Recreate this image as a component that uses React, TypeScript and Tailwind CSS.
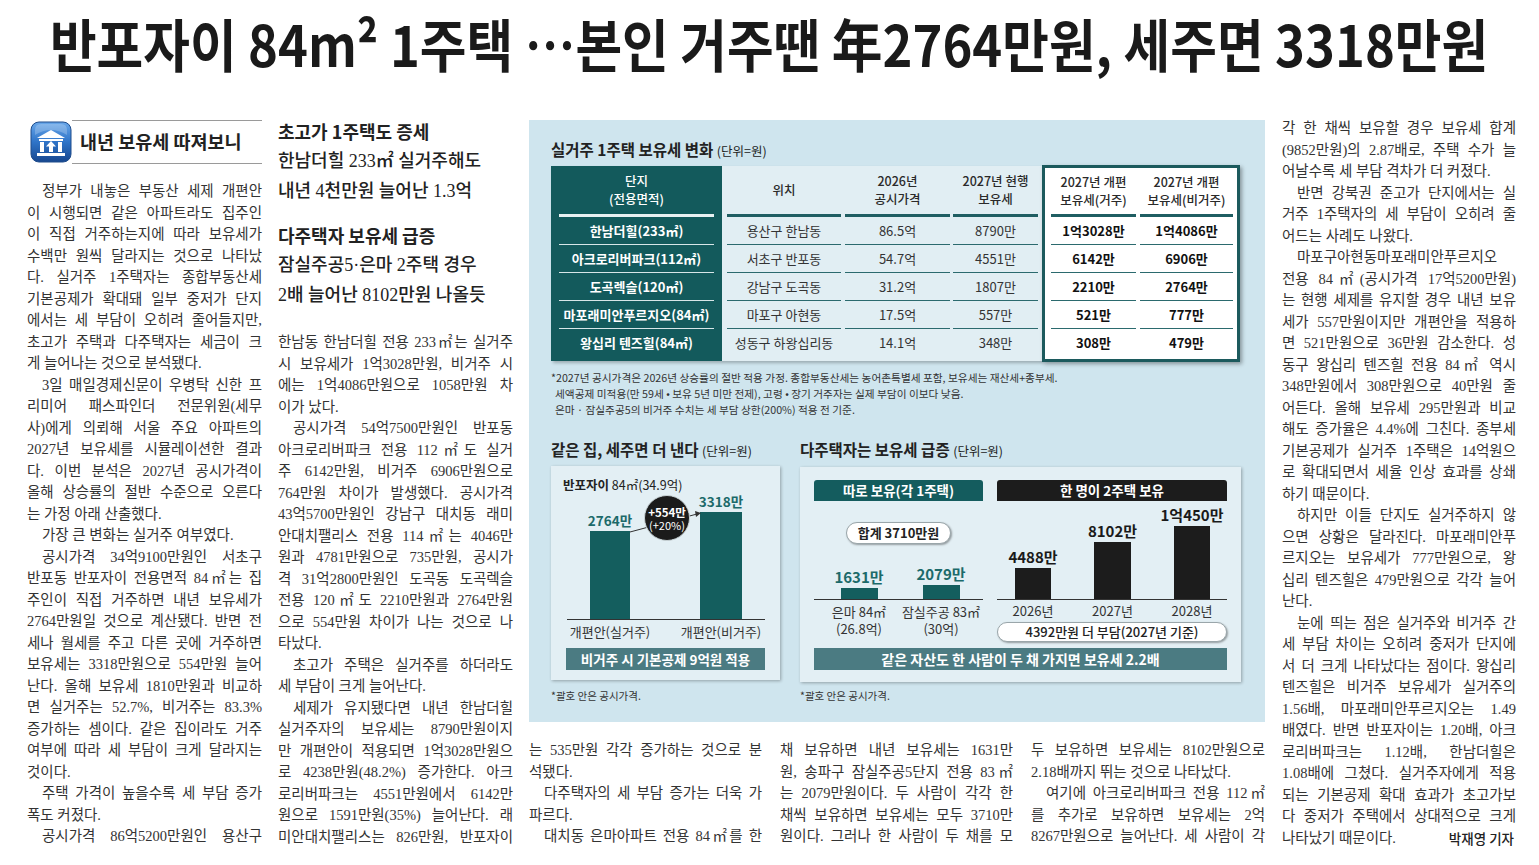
import clsx from "clsx";

const serif = "font-['Liberation_Serif','Noto_Sans_CJK_KR',serif]";
const sans = "font-['Noto_Sans_CJK_KR','Noto_Sans',sans-serif]";

// ">" at start = paragraph indent, "$" at end = last line of paragraph
const col1 = [
  ">정부가 내놓은 부동산 세제 개편안",
  "이 시행되면 같은 아파트라도 집주인",
  "이 직접 거주하는지에 따라 보유세가",
  "수백만 원씩 달라지는 것으로 나타났",
  "다. 실거주 1주택자는 종합부동산세",
  "기본공제가 확대돼 일부 중저가 단지",
  "에서는 세 부담이 오히려 줄어들지만,",
  "초고가 주택과 다주택자는 세금이 크",
  "게 늘어나는 것으로 분석됐다.$",
  ">3일 매일경제신문이 우병탁 신한 프",
  "리미어 패스파인더 전문위원(세무",
  "사)에게 의뢰해 서울 주요 아파트의",
  "2027년 보유세를 시뮬레이션한 결과",
  "다. 이번 분석은 2027년 공시가격이",
  "올해 상승률의 절반 수준으로 오른다",
  "는 가정 아래 산출했다.$",
  ">가장 큰 변화는 실거주 여부였다.$",
  ">공시가격 34억9100만원인 서초구",
  "반포동 반포자이 전용면적 84㎡는 집",
  "주인이 직접 거주하면 내년 보유세가",
  "2764만원일 것으로 계산됐다. 반면 전",
  "세나 월세를 주고 다른 곳에 거주하면",
  "보유세는 3318만원으로 554만원 늘어",
  "난다. 올해 보유세 1810만원과 비교하",
  "면 실거주는 52.7%, 비거주는 83.3%",
  "증가하는 셈이다. 같은 집이라도 거주",
  "여부에 따라 세 부담이 크게 달라지는",
  "것이다.$",
  ">주택 가격이 높을수록 세 부담 증가",
  "폭도 커졌다.$",
  ">공시가격 86억5200만원인 용산구",
];

const col2 = [
  "한남동 한남더힐 전용 233㎡는 실거주",
  "시 보유세가 1억3028만원, 비거주 시",
  "에는 1억4086만원으로 1058만원 차",
  "이가 났다.$",
  ">공시가격 54억7500만원인 반포동",
  "아크로리버파크 전용 112㎡도 실거",
  "주 6142만원, 비거주 6906만원으로",
  "764만원 차이가 발생했다. 공시가격",
  "43억5700만원인 강남구 대치동 래미",
  "안대치팰리스 전용 114㎡는 4046만",
  "원과 4781만원으로 735만원, 공시가",
  "격 31억2800만원인 도곡동 도곡렉슬",
  "전용 120㎡도 2210만원과 2764만원",
  "으로 554만원 차이가 나는 것으로 나",
  "타났다.$",
  ">초고가 주택은 실거주를 하더라도",
  "세 부담이 크게 늘어난다.$",
  ">세제가 유지됐다면 내년 한남더힐",
  "실거주자의 보유세는 8790만원이지",
  "만 개편안이 적용되면 1억3028만원으",
  "로 4238만원(48.2%) 증가한다. 아크",
  "로리버파크는 4551만원에서 6142만",
  "원으로 1591만원(35%) 늘어난다. 래",
  "미안대치팰리스는 826만원, 반포자이",
];

const colA = [
  "는 535만원 각각 증가하는 것으로 분",
  "석됐다.$",
  ">다주택자의 세 부담 증가는 더욱 가",
  "파르다.$",
  ">대치동 은마아파트 전용 84㎡를 한",
];

const colB = [
  "채 보유하면 내년 보유세는 1631만",
  "원, 송파구 잠실주공5단지 전용 83㎡",
  "는 2079만원이다. 두 사람이 각각 한",
  "채씩 보유하면 보유세는 모두 3710만",
  "원이다. 그러나 한 사람이 두 채를 모",
];

const colC = [
  "두 보유하면 보유세는 8102만원으로",
  "2.18배까지 뛰는 것으로 나타났다.$",
  ">여기에 아크로리버파크 전용 112㎡",
  "를 추가로 보유하면 보유세는 2억",
  "8267만원으로 늘어난다. 세 사람이 각",
];

const colRight = [
  "각 한 채씩 보유할 경우 보유세 합계",
  "(9852만원)의 2.87배로, 주택 수가 늘",
  "어날수록 세 부담 격차가 더 커졌다.$",
  ">반면 강북권 준고가 단지에서는 실",
  "거주 1주택자의 세 부담이 오히려 줄",
  "어드는 사례도 나왔다.$",
  ">마포구아현동마포래미안푸르지오",
  "전용 84㎡(공시가격 17억5200만원)",
  "는 현행 세제를 유지할 경우 내년 보유",
  "세가 557만원이지만 개편안을 적용하",
  "면 521만원으로 36만원 감소한다. 성",
  "동구 왕십리 텐즈힐 전용 84㎡ 역시",
  "348만원에서 308만원으로 40만원 줄",
  "어든다. 올해 보유세 295만원과 비교",
  "해도 증가율은 4.4%에 그친다. 종부세",
  "기본공제가 실거주 1주택은 14억원으",
  "로 확대되면서 세율 인상 효과를 상쇄",
  "하기 때문이다.$",
  ">하지만 이들 단지도 실거주하지 않",
  "으면 상황은 달라진다. 마포래미안푸",
  "르지오는 보유세가 777만원으로, 왕",
  "십리 텐즈힐은 479만원으로 각각 늘어",
  "난다.$",
  ">눈에 띄는 점은 실거주와 비거주 간",
  "세 부담 차이는 오히려 중저가 단지에",
  "서 더 크게 나타났다는 점이다. 왕십리",
  "텐즈힐은 비거주 보유세가 실거주의",
  "1.56배, 마포래미안푸르지오는 1.49",
  "배였다. 반면 반포자이는 1.20배, 아크",
  "로리버파크는 1.12배, 한남더힐은",
  "1.08배에 그쳤다. 실거주자에게 적용",
  "되는 기본공제 확대 효과가 초고가보",
  "다 중저가 주택에서 상대적으로 크게",
];

function Lines({ lines, className }: { lines: string[]; className?: string }) {
  return (
    <div className={clsx(serif, "text-[14.5px] text-[#333]", className)}>
      {lines.map((raw, i) => {
        const indent = raw.startsWith(">");
        const end = raw.endsWith("$");
        const text = raw.replace(/^>/, "").replace(/\$$/, "");
        return (
          <div
            key={i}
            className={clsx(
              "h-[21.5px] leading-[21.5px] whitespace-nowrap",
              indent && "pl-[15px]",
              end ? "text-left" : "text-justify [text-align-last:justify]"
            )}
          >
            {text}
          </div>
        );
      })}
    </div>
  );
}

function HouseIcon() {
  return (
    <svg width="42" height="42" viewBox="0 0 42 42" className="shrink-0">
      <defs>
        <linearGradient id="hb" x1="0" y1="0" x2="0" y2="1">
          <stop offset="0" stopColor="#6aa8ea" />
          <stop offset="0.5" stopColor="#2f74c8" />
          <stop offset="1" stopColor="#17478f" />
        </linearGradient>
      </defs>
      <rect x="1" y="1" width="40" height="40" rx="8" fill="url(#hb)" stroke="#1e4c8c" />
      <path d="M5 14 Q21 4 37 14 L37 9 Q37 3 31 3 L11 3 Q5 3 5 9 Z" fill="#ffffff" opacity="0.22" />
      <polygon points="21,9 35,17 7,17" fill="#fff" />
      <rect x="9" y="18" width="24" height="2" fill="#fff" />
      <rect x="10" y="21" width="4" height="10" fill="#fff" />
      <rect x="28" y="21" width="4" height="10" fill="#fff" />
      <polygon points="21,20 26,25.5 23,25.5 23,31 19,31 19,25.5 16,25.5" fill="#fff" />
      <rect x="7" y="32" width="28" height="3" fill="#fff" />
    </svg>
  );
}

const rows = [
  ["한남더힐(233㎡)", "용산구 한남동", "86.5억", "8790만", "1억3028만", "1억4086만"],
  ["아크로리버파크(112㎡)", "서초구 반포동", "54.7억", "4551만", "6142만", "6906만"],
  ["도곡렉슬(120㎡)", "강남구 도곡동", "31.2억", "1807만", "2210만", "2764만"],
  ["마포래미안푸르지오(84㎡)", "마포구 아현동", "17.5억", "557만", "521만", "777만"],
  ["왕십리 텐즈힐(84㎡)", "성동구 하왕십리동", "14.1억", "348만", "308만", "479만"],
];

function TableCol({
  className,
  head,
  idx,
  tone,
  headH,
}: {
  className: string;
  head: React.ReactNode;
  idx: number;
  tone: "teal" | "plain" | "bold";
  headH: string;
}) {
  const teal = tone === "teal";
  return (
    <div className={clsx("flex flex-col", className)}>
      <div
        className={clsx(
          "flex items-center justify-center text-center leading-[18px] text-[12.5px] font-medium",
          headH,
          teal ? "text-white" : "text-[#2a2a2a]"
        )}
      >
        {head}
      </div>
      <div className={clsx("h-[3px]", teal ? "bg-[#e8f1f2]" : "bg-[#1f5e62]")} />
      {rows.map((r, i) => (
        <div
          key={i}
          className={clsx(
            "h-[28px] flex items-center justify-center whitespace-nowrap text-[13px]",
            i < rows.length - 1 && "border-b",
            teal ? "border-[#d7e6e8] text-white font-bold" : "border-[#2b6a6e]",
            tone === "plain" && "text-[#333]",
            tone === "bold" && "text-[#111] font-bold"
          )}
        >
          {r[idx]}
        </div>
      ))}
    </div>
  );
}

function ValueBar({
  label,
  bar,
  color,
  text,
  wrap,
  barW,
  size,
}: {
  label: string;
  bar: string;
  color: string;
  text: string;
  wrap: string;
  barW: string;
  size: string;
}) {
  return (
    <div className={clsx("flex flex-col items-center", wrap)}>
      <div className={clsx("leading-[16px] mb-[3px] font-bold whitespace-nowrap", size, text)}>{label}</div>
      <div className={clsx(barW, bar, color)} />
    </div>
  );
}

function Infographic() {
  return (
    <div className={clsx(sans, "mt-[2px] h-[602px] bg-[#cfe5ee] pl-[22px] pt-[19px]")}>
      <div className="h-[20px] leading-[20px] text-[15.5px] font-bold text-[#222]">
        실거주 1주택 보유세 변화 <span className="text-[12.5px] font-normal">(단위=원)</span>
      </div>

      <div className="mt-[6px] flex items-start">
        <div className="mt-[1px] h-[195px] flex shadow-[2px_2px_3px_rgba(0,0,0,0.25)]">
          <div className="w-[171px] bg-[#135a5c] px-[8px]">
            <TableCol
              className="w-full"
              idx={0}
              tone="teal"
              headH="h-[48px]"
              head={
                <span>
                  단지
                  <br />
                  (전용면적)
                </span>
              }
            />
          </div>
          <div className="w-[320px] bg-[#e1eef3] flex pl-[5px] pr-[4px]">
            <TableCol className="w-[114px]" idx={1} tone="plain" headH="h-[48px]" head="위치" />
            <TableCol
              className="w-[105px] ml-[4px]"
              idx={2}
              tone="plain"
              headH="h-[48px]"
              head={
                <span>
                  2026년
                  <br />
                  공시가격
                </span>
              }
            />
            <TableCol
              className="w-[85px] ml-[3px]"
              idx={3}
              tone="plain"
              headH="h-[48px]"
              head={
                <span>
                  2027년 현행
                  <br />
                  보유세
                </span>
              }
            />
          </div>
        </div>
        <div className="w-[198px] h-[197px] bg-white border-[3px] border-[#1c5a5d] shadow-[2px_2px_4px_rgba(0,0,0,0.35)] flex pl-[6px] pr-[4px]">
          <TableCol
            className="w-[85px]"
            idx={4}
            tone="bold"
            headH="h-[46px]"
            head={
              <span>
                2027년 개편
                <br />
                보유세(거주)
              </span>
            }
          />
          <TableCol
            className="w-[93px] ml-[4px]"
            idx={5}
            tone="bold"
            headH="h-[46px]"
            head={
              <span>
                2027년 개편
                <br />
                보유세(비거주)
              </span>
            }
          />
        </div>
      </div>

      <div className="mt-[8px] text-[10.7px] leading-[16px] text-[#333]">
        <div>*2027년 공시가격은 2026년 상승률의 절반 적용 가정. 종합부동산세는 농어촌특별세 포함, 보유세는 재산세+종부세.</div>
        <div className="pl-[4px]">세액공제 미적용(만 59세 • 보유 5년 미만 전제), 고령 • 장기 거주자는 실제 부담이 이보다 낮음.</div>
        <div className="pl-[4px]">은마 · 잠실주공5의 비거주 수치는 세 부담 상한(200%) 적용 전 기준.</div>
      </div>

      <div className="mt-[21px] flex gap-[20px]">
        {/* 같은 집 */}
        <div className="w-[229px]">
          <div className="h-[20px] leading-[20px] text-[15.5px] font-bold text-[#222] whitespace-nowrap">
            같은 집, 세주면 더 낸다 <span className="text-[12.5px] font-normal">(단위=원)</span>
          </div>
          <div className="relative mt-[7px] h-[214px] bg-[#e3eff4] shadow-[1px_1px_3px_rgba(0,0,0,0.3)] pt-[11px]">
            <div className="pl-[12px] h-[16px] leading-[16px] text-[12.5px] text-[#222]">
              <span className="font-bold">반포자이</span> 84㎡(34.9억)
            </div>
            <div className="ml-[16px] mr-[15px] mt-[1px] h-[126px] border-b border-[#333] flex items-end pl-[13px] gap-[51px]">
              <ValueBar label="2764만" bar="h-[88px]" barW="w-[40px]" wrap="w-[60px]" color="bg-[#145e5e]" text="text-[#1c6a6a]" size="text-[13.5px]" />
              <ValueBar label="3318만" bar="h-[107px]" barW="w-[42px]" wrap="w-[60px]" color="bg-[#145e5e]" text="text-[#1c6a6a]" size="text-[13.5px]" />
            </div>
            <div className="ml-[16px] mt-[2px] flex pl-[13px] gap-[51px] text-[13px] leading-[20px] text-[#333]">
              <div className="w-[60px] flex justify-center whitespace-nowrap">개편안(실거주)</div>
              <div className="w-[60px] flex justify-center whitespace-nowrap">개편안(비거주)</div>
            </div>
            <div className="mt-[6px] mx-[15px] h-[22px] bg-[#4b7b82] text-white font-bold text-[13.5px] flex items-center justify-center">
              비거주 시 기본공제 9억원 적용
            </div>
            <svg className="absolute left-0 top-0 pointer-events-none" width="229" height="214">
              <line x1="79" y1="66" x2="146" y2="48" stroke="#333" strokeWidth="1" />
              <polygon points="150,47 144,45 145,51" fill="#333" />
            </svg>
            <div className="absolute left-[93px] top-[29px] w-[46px] h-[46px] rounded-full bg-[#1b1b1b] border border-[#c8d3d6] text-white flex flex-col items-center justify-center">
              <div className="text-[11.5px] font-bold leading-[14px]">+554만</div>
              <div className="text-[11px] leading-[13px]">(+20%)</div>
            </div>
          </div>
          <div className="mt-[9px] text-[10.5px] leading-[14px] text-[#333]">*괄호 안은 공시가격.</div>
        </div>

        {/* 다주택자 */}
        <div className="w-[441px]">
          <div className="h-[20px] leading-[20px] text-[15.5px] font-bold text-[#222] whitespace-nowrap">
            다주택자는 보유세 급증 <span className="text-[12.5px] font-normal">(단위=원)</span>
          </div>
          <div className="mt-[8px] h-[215px] bg-[#e3eff4] shadow-[1px_1px_3px_rgba(0,0,0,0.3)] pt-[13px] px-[14px]">
            <div className="flex gap-[14px]">
              <div className="w-[170px] flex flex-col">
                <div className="h-[21px] bg-[#145c5e] rounded-t-[3px] text-white font-bold text-[13.5px] flex items-center justify-center">
                  따로 보유(각 1주택)
                </div>
                <div className="h-[99px] border-b border-[#333] flex flex-col">
                  <div className="mt-[21px] self-center h-[22px] px-[11px] rounded-full bg-white border border-[#9aa6aa] shadow-[1px_1px_2px_rgba(0,0,0,0.35)] flex items-center text-[13px] font-bold text-[#222] whitespace-nowrap">
                    합계 3710만원
                  </div>
                  <div className="flex-1 flex items-end pl-[15px] gap-[22px]">
                    <ValueBar label="1631만" bar="h-[11px]" barW="w-[37px]" wrap="w-[60px]" color="bg-[#145e5e]" text="text-[#1c6a6a]" size="text-[15px]" />
                    <ValueBar label="2079만" bar="h-[14px]" barW="w-[37px]" wrap="w-[60px]" color="bg-[#145e5e]" text="text-[#1c6a6a]" size="text-[15px]" />
                  </div>
                </div>
                <div className="mt-[3px] flex pl-[15px] gap-[22px] text-[13px] leading-[17px] text-[#333]">
                  <div className="w-[60px] flex flex-col items-center whitespace-nowrap">
                    <span>은마 84㎡</span>
                    <span>(26.8억)</span>
                  </div>
                  <div className="w-[60px] flex flex-col items-center whitespace-nowrap">
                    <span>잠실주공 83㎡</span>
                    <span>(30억)</span>
                  </div>
                </div>
              </div>

              <div className="w-[230px] flex flex-col">
                <div className="h-[21px] bg-[#1c1c1c] rounded-t-[3px] text-white font-bold text-[13.5px] flex items-center justify-center">
                  한 명이 2주택 보유
                </div>
                <div className="h-[99px] border-b border-[#333] flex items-end pl-[1px] gap-[9.5px]">
                  <ValueBar label="4488만" bar="h-[31px]" barW="w-[36px]" wrap="w-[70px]" color="bg-[#1c1c1c]" text="text-[#1a1a1a]" size="text-[15px]" />
                  <ValueBar label="8102만" bar="h-[57px]" barW="w-[37px]" wrap="w-[70px]" color="bg-[#1c1c1c]" text="text-[#1a1a1a]" size="text-[15px]" />
                  <ValueBar label="1억450만" bar="h-[73px]" barW="w-[36px]" wrap="w-[70px]" color="bg-[#1c1c1c]" text="text-[#1a1a1a]" size="text-[15px]" />
                </div>
                <div className="mt-[3px] flex pl-[1px] gap-[9.5px] text-[13px] leading-[16px] text-[#333]">
                  <div className="w-[70px] text-center">2026년</div>
                  <div className="w-[70px] text-center">2027년</div>
                  <div className="w-[70px] text-center">2028년</div>
                </div>
                <div className="mt-[3px] h-[20px] rounded-full bg-white border border-[#9aa6aa] shadow-[1px_1px_2px_rgba(0,0,0,0.35)] flex items-center justify-center text-[13px] font-medium text-[#222] whitespace-nowrap">
                  4392만원 더 부담(2027년 기준)
                </div>
              </div>
            </div>
            <div className="mt-[6px] h-[22px] bg-[#4b7b82] text-white font-bold text-[14px] flex items-center justify-center">
              같은 자산도 한 사람이 두 채 가지면 보유세 2.2배
            </div>
          </div>
          <div className="mt-[7px] text-[10.5px] leading-[14px] text-[#333]">*괄호 안은 공시가격.</div>
        </div>
      </div>
    </div>
  );
}

export default function App() {
  return (
    <div className="w-[1539px] h-[865px] overflow-hidden bg-white">
      {/* Headline */}
      <div className="h-[118px] pt-[7px] flex justify-center">
        <h1 className={clsx(sans, "font-bold text-[57px] leading-[70px] text-[#1a1a1a] whitespace-nowrap scale-x-[0.89]")}>
          반포자이 84m² 1주택 …본인 거주땐 年2764만원, 세주면 3318만원
        </h1>
      </div>

      <div className="flex pl-[27px]">
        {/* Column 1 */}
        <div className="w-[235px]">
          <div className="h-[48px] flex items-center">
            <div className="ml-[3px]">
              <HouseIcon />
            </div>
            <div className={clsx(sans, "flex-1 h-[44px] border-y border-[#9a9a9a] flex items-center pl-[8px] text-[18.5px] font-bold text-[#222]")}>
              내년 보유세 따져보니
            </div>
          </div>
          <Lines lines={col1} className="mt-[15px]" />
        </div>

        {/* Column 2 */}
        <div className="w-[235px] ml-[16px]">
          <div className="-mt-[2px] text-[18px] leading-[30px] text-[#222]">
            <div className={clsx(sans, "font-bold")}>초고가 1주택도 증세</div>
            <div className={clsx(serif, "font-medium")}>한남더힐 233㎡ 실거주해도</div>
            <div className={clsx(serif, "font-medium")}>내년 4천만원 늘어난 1.3억</div>
          </div>
          <div className="mt-[14px] text-[18px] leading-[30px] text-[#222]">
            <div className={clsx(sans, "font-bold")}>다주택자 보유세 급증</div>
            <div className={clsx(serif, "font-medium")}>잠실주공5·은마 2주택 경우</div>
            <div className={clsx(serif, "font-medium")}>2배 늘어난 8102만원 나올듯</div>
          </div>
          <Lines lines={col2} className="mt-[22px]" />
        </div>

        {/* Center: infographic + 3 columns */}
        <div className="w-[736px] ml-[16px]">
          <Infographic />
          <div className="mt-[18px] flex gap-[18px]">
            <Lines lines={colA} className="w-[233px]" />
            <Lines lines={colB} className="w-[233px]" />
            <Lines lines={colC} className="w-[234px]" />
          </div>
        </div>

        {/* Right column */}
        <div className="w-[234px] ml-[17px]">
          <Lines lines={colRight} />
          <div className={clsx(serif, "h-[21.5px] leading-[21.5px] text-[14.5px] text-[#333] flex justify-between")}>
            <span>나타났기 때문이다.</span>
            <span className={clsx(sans, "text-[13.5px] font-medium text-[#222] pr-[2px]")}>박재영 기자</span>
          </div>
        </div>
      </div>
    </div>
  );
}
